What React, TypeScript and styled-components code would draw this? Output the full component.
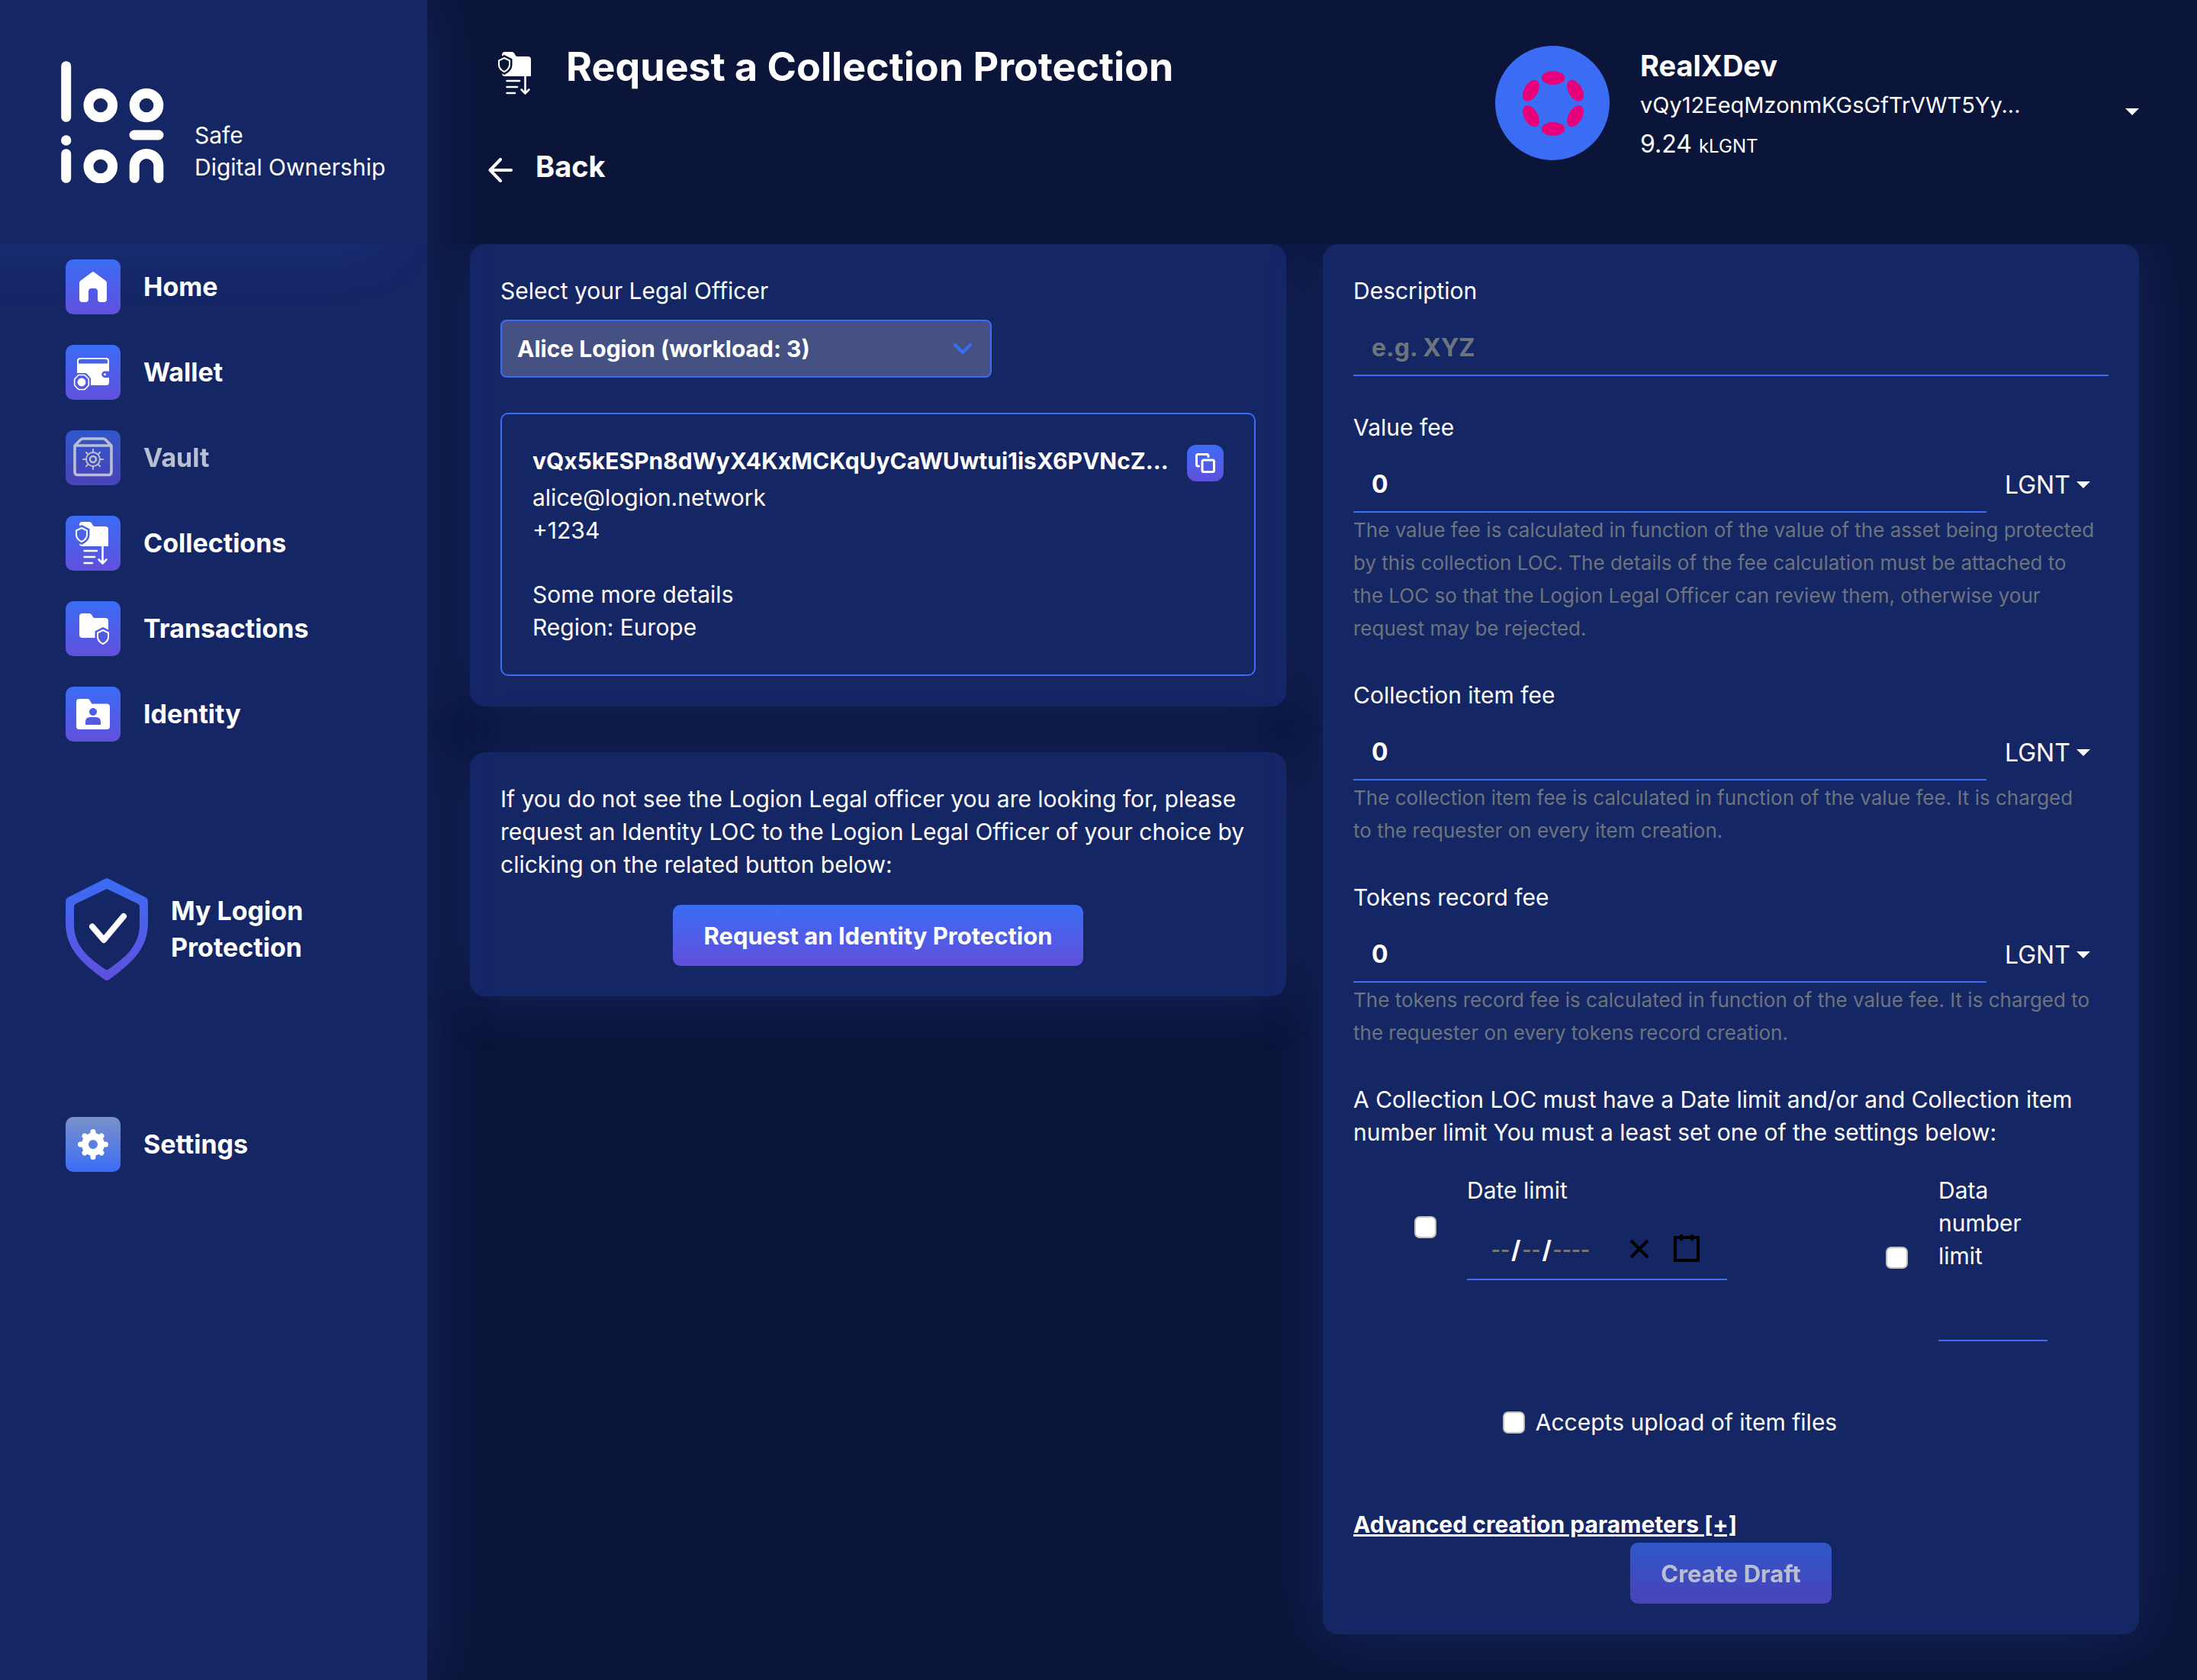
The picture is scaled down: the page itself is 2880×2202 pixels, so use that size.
import React, { useId } from 'react';
import styled, { createGlobalStyle, css } from 'styled-components';

const c = {
  page: '#0b153a',
  panel: '#152665',
  accent: '#3b6cf4',
  accentEnd: '#6050dc',
  muted: '#6c757d',
  text: '#ffffff',
};

const lh = '43px';
const glow = '0 0 80px rgba(59, 108, 244, 0.2)';

const GlobalStyle = createGlobalStyle`
  *, *::before, *::after { box-sizing: border-box; }
  body {
    margin: 0;
    background: ${c.page};
    color: ${c.text};
    font-family: Inter, "Open Sans", sans-serif;
    font-size: 30px;
    line-height: ${lh};
  }
  p, h1, h2 { margin: 0; }
  button, input, select { font: inherit; color: inherit; }
  a { color: inherit; text-decoration: none; }
`;

const Shell = styled.div`
  display: flex;
  align-items: stretch;
  min-height: 100vh;
`;

/* ---------- sidebar ---------- */

const Sidebar = styled.aside`
  flex: 0 0 560px;
  position: relative;
  z-index: 1;
  background: ${c.panel};
  box-shadow: ${glow};
`;

const Brand = styled.div`
  display: flex;
  align-items: flex-end;
  gap: 40px;
  height: 320px;
  padding: 0 20px 80px 80px;
`;

const Tagline = styled.p`
  line-height: 42px;
`;

const MenuArea = styled.div`
  overflow: hidden;
`;

const MenuGlow = styled.div`
  height: 320px;
  margin: -320px 60px 0 -80px;
  border-radius: 20px;
  box-shadow: ${glow};
`;

const Menu = styled.nav`
  display: flex;
  flex-direction: column;
  gap: 40px;
  padding: 20px 40px 0 86px;
`;

const MenuLink = styled.a<{ $dim?: boolean }>`
  display: flex;
  align-items: center;
  gap: 30px;
  font-size: 34px;
  line-height: 48px;
  font-weight: 700;
  opacity: ${p => (p.$dim ? 0.7 : 1)};
`;

const ShieldRow = styled.div`
  padding: 179px 40px 179px 86px;
`;

const SettingsRow = styled.div`
  padding: 0 40px 40px 86px;
`;

const gradient = css`
  background: linear-gradient(180deg, ${c.accent}, ${c.accentEnd});
`;

const IconTile = styled.span<{ $alt?: boolean }>`
  display: flex;
  flex: none;
  width: 72px;
  height: 72px;
  border-radius: 10px;
  ${gradient}
  ${p => p.$alt && css`background: linear-gradient(180deg, #7b91cc, ${c.accent});`}
`;

/* ---------- main ---------- */

const Main = styled.main`
  flex: 1;
  min-width: 0;
  display: flex;
  flex-direction: column;
`;

const columns = css`
  display: grid;
  grid-template-columns: minmax(0, 1fr) minmax(0, 1fr);
  column-gap: 48px;
  padding-left: 56px;
  padding-right: 76px;
`;

const Header = styled.header`
  ${columns}
  height: 320px;
`;

const TitleBlock = styled.div`
  display: flex;
  flex-direction: column;
  padding: 52px 0 0 24px;
`;

const TitleRow = styled.div`
  display: flex;
  gap: 30px;
  svg { margin-top: 8px; flex: none; }
`;

const Title = styled.h1`
  font-size: 52px;
  line-height: 72px;
  font-weight: 700;
  white-space: nowrap;
`;

const BackButton = styled.button`
  display: flex;
  align-items: center;
  gap: 30px;
  align-self: flex-start;
  margin-top: 59px;
  padding: 0;
  border: 0;
  background: none;
  font-size: 38px;
  line-height: 54px;
  font-weight: 700;
  svg { margin-top: 10px; }
`;

const Account = styled.div`
  display: flex;
  align-items: flex-start;
  padding: 60px 0 0 226px;
`;

const AccountText = styled.div`
  flex: 1;
  min-width: 0;
  padding-left: 40px;
  line-height: 50px;
  white-space: nowrap;
`;

const AccountName = styled.h2`
  font-size: 38px;
  line-height: 52px;
  font-weight: 700;
`;

const AccountAddress = styled.p`
  font-size: 29px;
  line-height: 52px;
`;

const Balance = styled.p`
  font-size: 32px;
  line-height: 50px;
  small { font-size: 24px; line-height: 1; }
`;

const CaretButton = styled.button`
  align-self: flex-start;
  margin-top: 66px;
  padding: 0;
  border: 0;
  background: none;
  line-height: 40px;
`;

const Caret = styled.span`
  display: inline-block;
  vertical-align: 6px;
  border: 9px solid transparent;
  border-top-color: currentColor;
  border-bottom: 0;
`;

const Content = styled.div`
  ${columns}
  flex: 1;
  align-items: start;
  overflow: hidden;
  padding-bottom: 60px;
`;

const Stack = styled.div`
  display: flex;
  flex-direction: column;
  gap: 60px;
`;

const Panel = styled.section`
  padding: 40px;
  border-radius: 20px;
  background: ${c.panel};
  box-shadow: ${glow};
`;

const Label = styled.label`
  display: block;
  margin-bottom: 16px;
`;

const SelectWrap = styled.div`
  display: grid;
  width: 644px;
  align-items: center;
  > * { grid-area: 1 / 1; }
  svg { justify-self: end; margin-right: 26px; pointer-events: none; }
`;

const Select = styled.select`
  appearance: none;
  width: 100%;
  height: 76px;
  padding: 0 20px;
  border: 2px solid ${c.accent};
  border-radius: 8px;
  background: #445182;
  font-weight: 700;
`;

const OfficerCard = styled.div`
  display: flex;
  justify-content: space-between;
  margin-top: 46px;
  padding: 40px;
  border: 2px solid ${c.accent};
  border-radius: 10px;
`;

const OfficerLines = styled.div`
  min-width: 0;
  white-space: nowrap;
`;

const Address = styled.p`
  font-weight: 700;
  margin-bottom: 5px;
`;

const Details = styled.div`
  margin-top: 41px;
`;

const CopyButton = styled.button`
  display: grid;
  place-items: center;
  flex: none;
  width: 48px;
  height: 48px;
  padding: 0;
  border: 0;
  border-radius: 12px;
  ${gradient}
`;

const PrimaryButton = styled.button`
  display: block;
  margin: 0 auto;
  padding: 0 40px;
  height: 80px;
  border: 0;
  border-radius: 10px;
  font-size: 31px;
  font-weight: 700;
  white-space: nowrap;
  ${gradient}
  &:disabled { opacity: 0.7; }
`;

const Hint = styled.p`
  margin-bottom: 31px;
`;

/* ---------- form ---------- */

const FieldGroup = styled.div`
  margin-bottom: 46px;
`;

const InputRow = styled.div`
  display: flex;
  align-items: stretch;
`;

const LineInput = styled.input`
  flex: 1;
  width: 100%;
  min-width: 0;
  height: 74px;
  padding: 0 24px;
  border: 0;
  border-bottom: 2px solid ${c.accent};
  border-radius: 0;
  background: transparent;
  font-size: 32px;
  font-weight: 700;
  &::placeholder { color: ${c.muted}; opacity: 1; }
`;

const UnitButton = styled.button`
  display: flex;
  align-items: center;
  gap: 8px;
  width: 160px;
  padding: 0 24px;
  border: 0;
  background: none;
  font-size: 32px;
`;

const HelpText = styled.p`
  padding-right: 17px;
  color: ${c.muted};
  small { font-size: 26px; line-height: 1; }
`;

const Limits = styled.div`
  display: flex;
  justify-content: space-between;
  align-items: flex-start;
  padding: 33px 80px 0;
`;

const Limit = styled.div`
  display: flex;
  align-items: center;
  gap: 40px;
`;

const Check = styled.input`
  appearance: none;
  flex: none;
  width: 29px;
  height: 29px;
  margin: 0;
  border: 2px solid #bfbfbf;
  border-radius: 7px;
  background: #fff;
`;

const NumberLimit = styled.div`
  width: 143px;
`;

const DateBox = styled.div`
  display: flex;
  align-items: center;
  width: 341px;
  height: 80px;
  padding: 0 34px 0 30px;
  border-bottom: 2px solid ${c.accent};
  font-size: 32px;
  font-weight: 700;
`;

const DatePart = styled.input<{ $w: number }>`
  width: ${p => p.$w}px;
  padding: 0;
  border: 0;
  background: transparent;
  font-size: 26px;
  text-align: center;
  &::placeholder { color: #757575; opacity: 1; }
`;

const IconButton = styled.button<{ $push?: boolean }>`
  display: flex;
  padding: 0;
  border: 0;
  background: none;
  color: #000;
  margin-left: ${p => (p.$push ? 'auto' : '24px')};
`;

const UploadRow = styled.div`
  display: flex;
  align-items: center;
  justify-content: center;
  gap: 14px;
  padding: 85px 160px 91px 0;
`;

const AdvancedLink = styled.a`
  display: block;
  width: max-content;
  margin-bottom: 2px;
  font-weight: 700;
  text-decoration: underline;
`;

/* ---------- drawings ---------- */

const Logo = () => (
  <svg width="135" height="160" viewBox="0 0 135 160" fill="none" stroke="#fff" strokeWidth="13" strokeLinecap="round" aria-label="logion">
    <path d="M6.7 6.7V73.3" />
    <circle cx="51.8" cy="58" r="15.8" />
    <circle cx="112" cy="58" r="15.8" />
    <path d="M96 97H128" />
    <circle cx="6.7" cy="104" r="6.7" fill="#fff" stroke="none" />
    <path d="M6.7 121.7V153.3" />
    <circle cx="51.8" cy="138" r="15.8" />
    <path d="M96.2 153.3V137.3a15.8 15.8 0 0 1 31.6 0V153.3" />
  </svg>
);

const HomeIcon = () => (
  <svg width="72" height="72" viewBox="0 0 72 72">
    <path fill="#fff" d="M34 17.2q2-2 4 0L52.6 28Q54 29.300 54 31V52q0 4-4 4H46q-4 0-4-4V42q0-4-4-4H34q-4 0-4 4V52q0 4-4 4H22q-4 0-4-4V31q0-1.700 1.400-3Z" />
  </svg>
);

const WalletIcon = () => (
  <svg width="72" height="72" viewBox="0 0 72 72">
    <path fill="#fff" fillRule="evenodd" d="M19 17H53q4 0 4 4V34.500H51.500a4.300 4.300 0 0 0 0 8.600H57V49q0 4-4 4H33V44L27 37H15V21q0-4 4-4ZM17 24.600H55V22q0-3.200-3-3.200H20q-3 0-3 3.200Z" />
    <circle cx="51.500" cy="38.800" r="1.500" fill="#fff" />
    <path d="M17 39.500h8l5.300 5.500v8l-5.300 5.500h-8L11.700 53v-8Z" fill="none" stroke="#fff" strokeWidth="1.700" />
    <circle cx="21" cy="49" r="5.400" fill="#fff" />
  </svg>
);

const VaultIcon = () => (
  <svg width="72" height="72" viewBox="0 0 72 72" fill="none" stroke="#fff" strokeWidth="3.600" strokeLinejoin="round">
    <path d="M12 20V54.500q0 4 4 4H56q4 0 4-4V20L52 12q-1-1-2.500-1H22.500Q21 11 20 12ZM12 20H60" />
    <g strokeWidth="2">
      <circle cx="36" cy="38" r="9" />
      <circle cx="36" cy="38" r="4" strokeWidth="2.600" />
      <path strokeLinecap="round" d="M36 29V25M36 47V51M27 38H23M45 38H49M29.600 31.600L26.800 28.800M42.400 31.600L45.200 28.800M29.600 44.400L26.800 47.200M42.400 44.400L45.200 47.200" />
    </g>
  </svg>
);

const shieldPath = (x: number, y: number) =>
  `M${x} ${y}L${x + 7} ${y + 3.4}V${y + 9}C${x + 7} ${y + 13} ${x + 4} ${y + 16} ${x} ${y + 18}C${x - 4} ${y + 16} ${x - 7} ${y + 13} ${x - 7} ${y + 9}V${y + 3.4}Z`;

const CollectionIcon = () => {
  const id = useId();
  return (
    <svg width="72" height="72" viewBox="0 0 72 72" fill="none" stroke="#fff">
      <mask id={id} maskUnits="userSpaceOnUse" x="0" y="0" width="72" height="72">
        <rect width="72" height="72" fill="#fff" stroke="none" />
        <path d={shieldPath(21, 16)} fill="#000" stroke="#000" strokeWidth="7" />
      </mask>
      <path mask={`url(#${id})`} fill="#fff" stroke="none" d="M22 8H31q2 0 3 1.500L36 13q.6 1 2 1H52q4 0 4 4V40H22q-4 0-4-4V12q0-4 4-4Z" />
      <path d={shieldPath(21, 16)} strokeWidth="2" strokeLinejoin="round" />
      <path strokeWidth="2.600" strokeLinecap="round" d="M24.500 46H41M24.500 54H38M24.500 62H35M48.500 40V62M43.600 57.500L48.500 62.500L53.400 57.500" />
    </svg>
  );
};

const TransactionIcon = () => {
  const id = useId();
  return (
    <svg width="72" height="72" viewBox="0 0 72 72">
      <mask id={id} maskUnits="userSpaceOnUse" x="0" y="0" width="72" height="72">
        <rect width="72" height="72" fill="#fff" />
        <path d={shieldPath(49, 38)} fill="#000" stroke="#000" strokeWidth="7" />
      </mask>
      <path mask={`url(#${id})`} fill="#fff" d="M22 16H31q2 0 3 1.500L36 21q.6 1 2 1H52q4 0 4 4V48H22q-4 0-4-4V20q0-4 4-4Z" />
      <path d={shieldPath(49, 38)} fill="none" stroke="#fff" strokeWidth="2" strokeLinejoin="round" />
    </svg>
  );
};

const IdentityIcon = () => (
  <svg width="72" height="72" viewBox="0 0 72 72">
    <path fill="#fff" fillRule="evenodd" d="M18 16H29q1.500 0 2.400 1.400L34.500 22.600H54q4 0 4 4V52q0 4-4 4H18q-4 0-4-4V20q0-4 4-4ZM36 28a5 5 0 1 0 .01 0ZM26 50H46V46q0-6-6-6H32q-6 0-6 6Z" />
  </svg>
);

const GearIcon = () => (
  <svg width="72" height="72" viewBox="0 0 72 72">
    <g stroke="#fff" strokeWidth="7" strokeLinecap="round">
      <path d="M36 19.500V25M36 47V52.500M19.500 36H25M47 36H52.500M25 25L28 28M47 47L44 44M47 25L44 28M25 47L28 44" />
    </g>
    <circle cx="36" cy="36" r="10.500" fill="none" stroke="#fff" strokeWidth="9" />
  </svg>
);

const ProtectionShield = () => (
  <svg width="108" height="134" viewBox="0 0 108 134" fill="none">
    <defs>
      <linearGradient id="shield-fill" x1="0" y1="0" x2="0" y2="1">
        <stop stopColor={c.accent} />
        <stop offset="1" stopColor={c.accentEnd} />
      </linearGradient>
    </defs>
    <path
      fill="url(#shield-fill)"
      fillRule="evenodd"
      d="M51.500 1Q54-.500 56.500 1L105.500 25.500Q108 27 108 30V58C108 93 86 112 57 133Q54 135 51 133C22 112 0 93 0 58V30Q0 27 2.500 25.500ZM53 14.500 13 33.800Q11 35 11 37.500V60C11 88 28 103 52 119.500Q54 121 56 119.500C80 103 97 88 97 60V37.500Q97 35 95 33.800L55 14.500Q54 14 53 14.500Z"
    />
    <path d="M35 63.500L50 81L76 50" stroke="#fff" strokeWidth="8" strokeLinecap="round" strokeLinejoin="round" />
  </svg>
);

const AvatarSvg = styled.svg`
  flex: none;
`;

const Avatar = () => (
  <AvatarSvg width="150" height="150" viewBox="0 0 150 150" fill="#e6007a">
    <circle cx="75" cy="75" r="75" fill={c.accent} />
    {[0, 60, 120, 180, 240, 300].map(a => (
      <ellipse key={a} cx="76" cy="42" rx="15.200" ry="9" transform={`rotate(${a} 76 75.500)`} />
    ))}
  </AvatarSvg>
);

const BackArrow = () => (
  <svg width="32" height="32" viewBox="0 0 32 32" fill="none" stroke="#fff" strokeWidth="4" strokeLinecap="round" strokeLinejoin="round">
    <path d="M30 16H3M16 2L2.500 16L16 30" />
  </svg>
);

const Chevron = () => (
  <svg width="24" height="14" viewBox="0 0 24 14" fill="none" stroke={c.accent} strokeWidth="4" strokeLinecap="round" strokeLinejoin="round">
    <path d="M2 2L12 12L22 2" />
  </svg>
);

const CopyIcon = () => (
  <svg width="28" height="28" viewBox="0 0 28 28" fill="none" stroke="#fff" strokeWidth="3" strokeLinejoin="round" strokeLinecap="round">
    <rect x="10" y="10" width="15.500" height="15.500" rx="2" />
    <path d="M5.500 18H4.500q-2 0-2-2V4.500q0-2 2-2H16q2 0 2 2V5.500" />
  </svg>
);

const ClearIcon = () => (
  <svg width="38" height="38" viewBox="0 0 19 19" stroke="#000" strokeWidth="2">
    <path d="M4 4L15 15M15 4L4 15" />
  </svg>
);

const CalendarIcon = () => (
  <svg width="38" height="38" viewBox="0 0 19 19" fill="none" stroke="#000" strokeWidth="2">
    <rect x="2" y="2" width="15" height="15" />
    <path d="M6 0V4M13 0V4" />
  </svg>
);

/* ---------- page ---------- */

const menu = [
  { label: 'Home', icon: <HomeIcon /> },
  { label: 'Wallet', icon: <WalletIcon /> },
  { label: 'Vault', icon: <VaultIcon />, dim: true },
  { label: 'Collections', icon: <CollectionIcon /> },
  { label: 'Transactions', icon: <TransactionIcon /> },
  { label: 'Identity', icon: <IdentityIcon /> },
];

const fees = [
  {
    id: 'value-fee',
    label: 'Value fee',
    help: 'The value fee is calculated in function of the value of the asset being protected by this collection LOC. The details of the fee calculation must be attached to the LOC so that the Logion Legal Officer can review them, otherwise your request may be rejected.',
  },
  {
    id: 'item-fee',
    label: 'Collection item fee',
    help: 'The collection item fee is calculated in function of the value fee. It is charged to the requester on every item creation.',
  },
  {
    id: 'record-fee',
    label: 'Tokens record fee',
    help: 'The tokens record fee is calculated in function of the value fee. It is charged to the requester on every tokens record creation.',
  },
];

export default function App() {
  return (
    <>
      <GlobalStyle />
      <Shell>
        <Sidebar>
          <Brand>
            <Logo />
            <Tagline>Safe<br />Digital Ownership</Tagline>
          </Brand>
          <MenuArea>
            <MenuGlow />
            <Menu>
              {menu.map(m => (
                <MenuLink key={m.label} href="#" $dim={m.dim}>
                  <IconTile>{m.icon}</IconTile>
                  {m.label}
                </MenuLink>
              ))}
            </Menu>
            <ShieldRow>
              <MenuLink href="#">
                <ProtectionShield />
                <span>My Logion<br />Protection</span>
              </MenuLink>
            </ShieldRow>
            <SettingsRow>
              <MenuLink href="#">
                <IconTile $alt><GearIcon /></IconTile>
                Settings
              </MenuLink>
            </SettingsRow>
          </MenuArea>
        </Sidebar>

        <Main>
          <Header>
            <TitleBlock>
              <TitleRow>
                <CollectionIcon />
                <Title>Request a Collection Protection</Title>
              </TitleRow>
              <BackButton type="button"><BackArrow />Back</BackButton>
            </TitleBlock>
            <Account>
              <Avatar />
              <AccountText>
                <AccountName>RealXDev</AccountName>
                <AccountAddress>vQy12EeqMzonmKGsGfTrVWT5Yy...</AccountAddress>
                <Balance>9.24 <small>kLGNT</small></Balance>
              </AccountText>
              <CaretButton type="button" aria-label="Account menu"><Caret /></CaretButton>
            </Account>
          </Header>

          <Content>
            <Stack>
              <Panel>
                <Label htmlFor="officer">Select your Legal Officer</Label>
                <SelectWrap>
                  <Select id="officer">
                    <option>Alice Logion (workload: 3)</option>
                  </Select>
                  <Chevron />
                </SelectWrap>
                <OfficerCard>
                  <OfficerLines>
                    <Address>vQx5kESPn8dWyX4KxMCKqUyCaWUwtui1isX6PVNcZ...</Address>
                    <p>alice@logion.network</p>
                    <p>+1234</p>
                    <Details>
                      <p>Some more details</p>
                      <p>Region: Europe</p>
                    </Details>
                  </OfficerLines>
                  <CopyButton type="button" aria-label="Copy address"><CopyIcon /></CopyButton>
                </OfficerCard>
              </Panel>
              <Panel>
                <Hint>
                  If you do not see the Logion Legal officer you are looking for, please request an Identity LOC to the Logion Legal Officer of your choice by clicking on the related button below:
                </Hint>
                <PrimaryButton type="button">Request an Identity Protection</PrimaryButton>
              </Panel>
            </Stack>

            <Panel>
              <FieldGroup>
                <Label htmlFor="description">Description</Label>
                <InputRow>
                  <LineInput id="description" placeholder="e.g. XYZ" />
                </InputRow>
              </FieldGroup>
              {fees.map(f => (
                <FieldGroup key={f.id}>
                  <Label htmlFor={f.id}>{f.label}</Label>
                  <InputRow>
                    <LineInput id={f.id} defaultValue="0" />
                    <UnitButton type="button">LGNT<Caret /></UnitButton>
                  </InputRow>
                  <HelpText><small>{f.help}</small></HelpText>
                </FieldGroup>
              ))}
              <p>
                A Collection LOC must have a Date limit and/or and Collection item number limit You must a least set one of the settings below:
              </p>
              <Limits>
                <Limit>
                  <Check type="checkbox" aria-label="Enable date limit" />
                  <div>
                    <Label htmlFor="date-limit">Date limit</Label>
                    <DateBox>
                      <DatePart id="date-limit" $w={28} placeholder="--" aria-label="Day" />
                      /
                      <DatePart $w={28} placeholder="--" aria-label="Month" />
                      /
                      <DatePart $w={52} placeholder="----" aria-label="Year" />
                      <IconButton type="button" $push aria-label="Clear date"><ClearIcon /></IconButton>
                      <IconButton type="button" aria-label="Open calendar"><CalendarIcon /></IconButton>
                    </DateBox>
                  </div>
                </Limit>
                <Limit>
                  <Check type="checkbox" aria-label="Enable data number limit" />
                  <NumberLimit>
                    <Label htmlFor="number-limit">Data number limit</Label>
                    <LineInput id="number-limit" />
                  </NumberLimit>
                </Limit>
              </Limits>
              <UploadRow>
                <Check id="upload" type="checkbox" />
                <label htmlFor="upload">Accepts upload of item files</label>
              </UploadRow>
              <AdvancedLink href="#">Advanced creation parameters [+]</AdvancedLink>
              <PrimaryButton type="button" disabled>Create Draft</PrimaryButton>
            </Panel>
          </Content>
        </Main>
      </Shell>
    </>
  );
}
